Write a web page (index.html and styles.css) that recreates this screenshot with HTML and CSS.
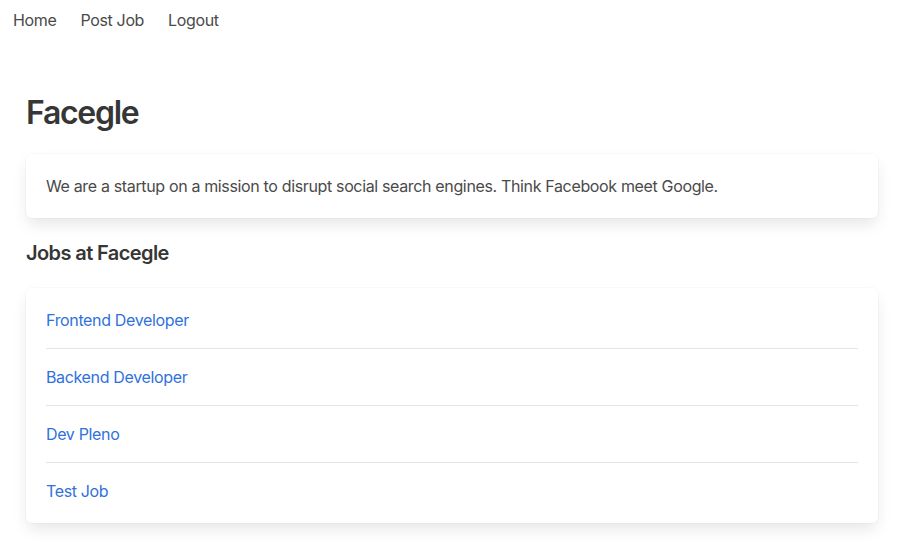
FILE: index.html
```html
<!DOCTYPE html>
<html>
<head>
<meta charset="utf-8">
<link rel="stylesheet" href="styles.css">
</head>
<body>
<nav class="nav">
  <a class="nav-item" href="#">Home</a>
  <a class="nav-item" href="#">Post Job</a>
  <a class="nav-item" href="#">Logout</a>
</nav>
<main class="main">
  <h1 class="title">Facegle</h1>
  <div class="box desc">We are a startup on a mission to disrupt social search engines. Think Facebook meet Google.</div>
  <h2 class="subtitle">Jobs at Facegle</h2>
  <div class="box jobs">
    <div class="job"><a href="#">Frontend Developer</a></div>
    <div class="job"><a href="#">Backend Developer</a></div>
    <div class="job"><a href="#">Dev Pleno</a></div>
    <div class="job"><a href="#">Test Job</a></div>
  </div>
</main>
</body>
</html>
```
FILE: styles.css
```css
* { box-sizing: border-box; }
html, body { margin: 0; padding: 0; background: #fff; }
body {
  font-family: Inter, "Noto Sans", sans-serif;
  font-size: 16px;
  line-height: 24px;
  letter-spacing: -0.35px;
  color: #4a4a4a;
}
a { text-decoration: none; }
.nav {
  display: flex;
  gap: 24px;
  padding: 8px 13px;
}
.nav-item { color: #4a4a4a; }
.main { padding: 0 27px 28px 26px; margin-top: 53px; }
.title {
  margin: 0;
  font-size: 32px;
  line-height: 40px;
  font-weight: 600;
  letter-spacing: -1.3px;
  color: #363636;
}
.box {
  background: #fff;
  border-radius: 6px;
  box-shadow: 0 8px 16px -2px rgba(10,10,10,0.1), 0 0 0 1px rgba(10,10,10,0.02);
  padding: 20px;
}
.desc { margin-top: 21px; }
.subtitle {
  margin: 22px 0 22px;
  font-size: 20px;
  line-height: 26px;
  font-weight: 600;
  letter-spacing: -0.6px;
  color: #363636;
}
.job { padding: 16px 0; border-bottom: 1px solid #e5e5e5; }
.job:first-child { padding-top: 0; }
.job:last-child { padding-bottom: 0; border-bottom: none; }
.job a { color: #3071dc; }
```
